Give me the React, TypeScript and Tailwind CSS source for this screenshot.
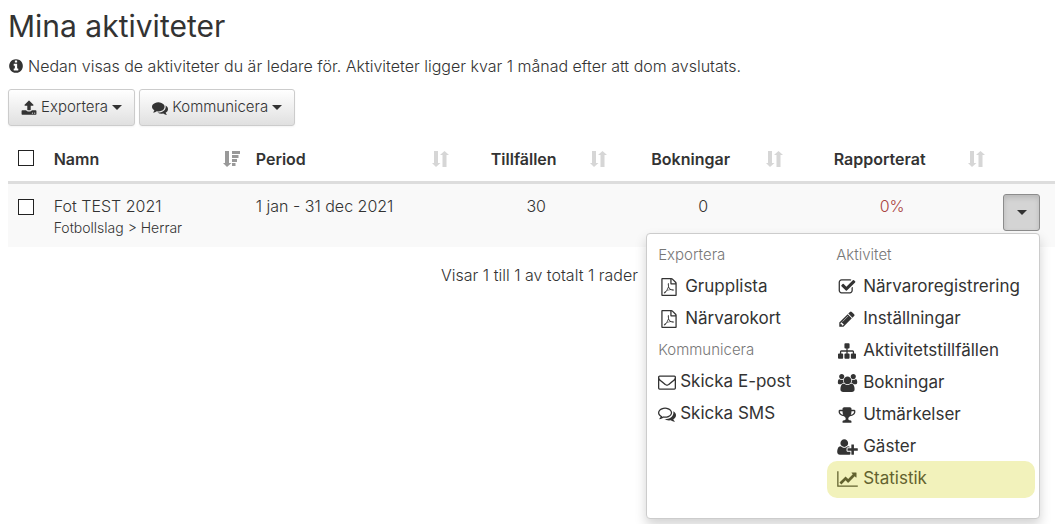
import type { ReactNode } from "react";

// Font glyphs are drawn on a 1792 unit grid; a few of them are 2048 wide.
const ICONS = {
  info: "M1152 1376v-160q0-14-9-23t-23-9h-96v-512q0-14-9-23t-23-9h-320q-14 0-23 9t-9 23v160q0 14 9 23t23 9h96v320h-96q-14 0-23 9t-9 23v160q0 14 9 23t23 9h448q14 0 23-9t9-23zm-128-896v-160q0-14-9-23t-23-9h-192q-14 0-23 9t-9 23v160q0 14 9 23t23 9h192q14 0 23-9t9-23zm640 416q0 209-103 385.5t-279.5 279.5-385.5 103-385.5-103-279.5-279.5-103-385.5 103-385.5 279.5-279.5 385.5-103 385.5 103 279.5 279.5 103 385.5z",
  upload:
    "M1344 1472q0-26-19-45t-45-19-45 19-19 45 19 45 45 19 45-19 19-45zm256 0q0-26-19-45t-45-19-45 19-19 45 19 45 45 19 45-19 19-45zm128-224v320q0 40-28 68t-68 28h-1472q-40 0-68-28t-28-68v-320q0-40 28-68t68-28h427q21 56 70.5 92t110.5 36h256q61 0 110.5-36t70.5-92h427q40 0 68 28t28 68zm-325-648q-17 40-59 40h-256v448q0 26-19 45t-45 19h-256q-26 0-45-19t-19-45v-448h-256q-42 0-59-40-17-39 14-69l448-448q18-19 45-19t45 19l448 448q31 30 14 69z",
  comments:
    "M1408 768q0 139-94 257t-256.5 186.5-353.5 68.5q-86 0-176-16-124 88-278 128-36 9-86 16h-3q-11 0-20.5-8t-11.5-21q-1-3-1-6.5t.5-6.5 2-6l2.5-5 3.5-5.5 4-5 4.5-5 4-4.5q5-6 23-25t26-29.5 22.5-29 25-38.5 20.5-44q-124-72-195-177t-71-224q0-139 94-257t256.5-186.5 353.5-68.5 353.5 68.5 256.5 186.5 94 257zm384 256q0 120-71 224.5t-195 176.5q10 24 20.5 44t25 38.5 22.5 29 26 29.5 23 25q1 1 4 4.5t4.5 5 4 5 3.5 5.5l2.5 5 2 6 .5 6.5-1 6.5q-3 14-13 22t-22 7q-50-7-86-16-154-40-278-128-90 16-176 16-271 0-472-132 58 4 88 4 161 0 309-45t264-129q125-92 192-212t67-254q0-77-23-152 129 71 204 178t75 230z",
  commentsOutline:
    "M704 384q-153 0-286 52t-211.5 141-78.5 191q0 82 53 158t149 132l97 56-35 84q34-20 62-39l44-31 53 10q78 14 153 14 153 0 286-52t211.5-141 78.5-191-78.5-191-211.5-141-286-52zm0-128q191 0 353.5 68.5t256.5 186.5 94 257-94 257-256.5 186.5-353.5 68.5q-86 0-176-16-124 88-278 128-36 9-86 16h-3q-11 0-20.5-8t-11.5-21q-1-3-1-6.5t.5-6.5 2-6l2.5-5 3.5-5.5 4-5 4.5-5 4-4.5q5-6 23-25t26-29.5 22.5-29 25-38.5 20.5-44q-124-72-195-177t-71-224q0-139 94-257t256.5-186.5 353.5-68.5zm822 1169q10 24 20.5 44t25 38.5 22.5 29 26 29.5 23 25q1 1 4 4.5t4.5 5 4 5 3.5 5.5l2.5 5 2 6 .5 6.5-1 6.5q-3 14-13 22t-22 7q-50-7-86-16-154-40-278-128-90 16-176 16-271 0-472-132 58 4 88 4 161 0 309-45t264-129q125-92 192-212t67-254q0-77-23-152 129 71 204 178t75 230q0 120-71 224.5t-195 176.5z",
  envelope:
    "M1664 1504v-768q-32 36-69 66-268 206-426 338-51 43-83 67t-86.5 48.5-102.5 24.5h-2q-48 0-102.5-24.5t-86.5-48.5-83-67q-158-132-426-338-37-30-69-66v768q0 13 9.5 22.5t22.5 9.5h1472q13 0 22.5-9.5t9.5-22.5zm0-1051v-24.5l-.5-13-3-12.5-5.5-9-9-7.5-14-2.5h-1472q-13 0-22.5 9.5t-9.5 22.5q0 168 147 284 193 152 401 317 6 5 35 29.5t46 37.5 44.5 31.5 50.5 27.5 43 9h2q20 0 43-9t50.5-27.5 44.5-31.5 46-37.5 35-29.5q208-165 401-317 54-43 100.5-115.5t46.5-131.5zm128-37v1088q0 66-47 113t-113 47h-1472q-66 0-113-47t-47-113v-1088q0-66 47-113t113-47h1472q66 0 113 47t47 113z",
  checkSquare:
    "M1472 930v318q0 119-84.5 203.5t-203.5 84.5h-832q-119 0-203.5-84.5t-84.5-203.5v-832q0-119 84.5-203.5t203.5-84.5h832q63 0 117 25 15 7 18 23 3 17-9 29l-49 49q-10 10-23 10-3 0-9-2-23-6-45-6h-832q-66 0-113 47t-47 113v832q0 66 47 113t113 47h832q66 0 113-47t47-113v-254q0-13 9-22l64-64q10-10 23-10 6 0 12 3 20 8 20 29zm231-489l-814 814q-24 24-57 24t-57-24l-430-430q-24-24-24-57t24-57l110-110q24-24 57-24t57 24l263 263 647-647q24-24 57-24t57 24l110 110q24 24 24 57t-24 57z",
  pencil:
    "M491 1536l91-91-235-235-91 91v107h128v128h107zm523-928q0-22-22-22-10 0-17 7l-542 542q-7 7-7 17 0 22 22 22 10 0 17-7l542-542q7-7 7-17zm-54-192l416 416-832 832h-416v-416zm683 96q0 53-37 90l-166 166-416-416 166-165q36-38 90-38 53 0 91 38l235 234q37 39 37 91z",
  sitemap:
    "M1792 1248v320q0 40-28 68t-68 28h-320q-40 0-68-28t-28-68v-320q0-40 28-68t68-28h96v-192h-512v192h96q40 0 68 28t28 68v320q0 40-28 68t-68 28h-320q-40 0-68-28t-28-68v-320q0-40 28-68t68-28h96v-192h-512v192h96q40 0 68 28t28 68v320q0 40-28 68t-68 28h-320q-40 0-68-28t-28-68v-320q0-40 28-68t68-28h96v-192q0-52 38-90t90-38h512v-192h-96q-40 0-68-28t-28-68v-320q0-40 28-68t68-28h320q40 0 68 28t28 68v320q0 40-28 68t-68 28h-96v192h512q52 0 90 38t38 90v192h96q40 0 68 28t28 68z",
  users:
    "M657 896q-162 5-265 128h-134q-82 0-138-40.5t-56-118.5q0-353 124-353 6 0 43.5 21t97.5 42.5 119 21.5q67 0 133-23-5 37-5 66 0 159 93 256zm1071 637q0 120-73 189.5t-194 69.5h-874q-121 0-194-69.5t-73-189.5q0-53 3.5-103.5t14-109 26.5-108.5 43-97.5 62-81 85.5-53.5 111.5-20q10 0 43 21.5t73 48 107 48 135 21.5 135-21.5 107-48 73-48 43-21.5q61 0 111.5 20t85.5 53.5 62 81 43 97.5 26.5 108.5 14 109 3.5 103.5zm-1024-1277q0 106-75 181t-181 75-181-75-75-181 75-181 181-75 181 75 75 181zm704 384q0 159-112.5 271.5t-271.5 112.5-271.5-112.5-112.5-271.5 112.5-271.5 271.5-112.5 271.5 112.5 112.5 271.5zm576 225q0 78-56 118.5t-138 40.5h-134q-103-123-265-128 93-97 93-256 0-29-5-66 66 23 133 23 59 0 119-21.5t97.5-42.5 43.5-21q124 0 124 353zm-128-609q0 106-75 181t-181 75-181-75-75-181 75-181 181-75 181 75 75 181z",
  trophy:
    "M522 883q-74-162-74-371h-256v96q0 78 94.5 162t235.5 113zm1078-275v-96h-256q0 209-74 371 141-29 235.5-113t94.5-162zm128-128v128q0 71-41.5 143t-112 130-173 97.5-215.5 44.5q-42 54-95 95-38 34-52.5 72.5t-14.5 89.5q0 54 30.5 91t97.5 37q75 0 133.5 45.5t58.5 114.5v64q0 14-9 23t-23 9h-832q-14 0-23-9t-9-23v-64q0-69 58.5-114.5t133.5-45.5q67 0 97.5-37t30.5-91q0-51-14.5-89.5t-52.5-72.5q-53-41-95-95-113-5-215.5-44.5t-173-97.5-112-130-41.5-143v-128q0-40 28-68t68-28h288v-96q0-66 47-113t113-47h576q66 0 113 47t47 113v96h288q40 0 68 28t28 68z",
  userPlus:
    "M704 896q-159 0-271.5-112.5t-112.5-271.5 112.5-271.5 271.5-112.5 271.5 112.5 112.5 271.5-112.5 271.5-271.5 112.5zm960 128h352q13 0 22.5 9.5t9.5 22.5v192q0 13-9.5 22.5t-22.5 9.5h-352v352q0 13-9.5 22.5t-22.5 9.5h-192q-13 0-22.5-9.5t-9.5-22.5v-352h-352q-13 0-22.5-9.5t-9.5-22.5v-192q0-13 9.5-22.5t22.5-9.5h352v-352q0-13 9.5-22.5t22.5-9.5h192q13 0 22.5 9.5t9.5 22.5v352zm-736 224q0 52 38 90t90 38h256v238q-68 50-171 50h-874q-121 0-194-69t-73-190q0-53 3.5-103.5t14-109 26.5-108.5 43-97.5 62-81 85.5-53.5 111.5-20q19 0 39 17 79 61 154.5 91.5t164.5 30.5 164.5-30.5 154.5-91.5q20-17 39-17 132 0 217 96h-223q-52 0-90 38t-38 90v192z",
  lineChart:
    "M2048 1536v128h-2048v-1536h128v1408h1920zm-128-1248v435q0 21-19.5 29.5t-35.5-7.5l-121-121-633 633q-10 10-23 10t-23-10l-233-233-416 416-192-192 585-585q10-10 23-10t23 10l233 233 464-464-121-121q-16-16-7.5-35.5t29.5-19.5h435q14 0 23 9t9 23z",
  filePdf:
    "M1596 380q28 28 48 76t20 88v1152q0 40-28 68t-68 28h-1344q-40 0-68-28t-28-68v-1600q0-40 28-68t68-28h896q40 0 88 20t76 48zm-444-244v376h376q-10-29-22-41l-313-313q-12-12-41-22zm384 1528v-1024h-416q-40 0-68-28t-28-68v-416h-768v1536h1280zm-514-593q33 26 84 56 59-7 117-7 147 0 177 49 16 22 2 52 0 1-1 2l-2 2v1q-6 38-71 38-48 0-115-20t-130-53q-221 24-392 83-153 262-242 262-15 0-28-7l-24-12q-1-1-6-5-10-10-6-36 9-40 56-91.5t132-96.5q14-9 23 6 2 2 2 4 52-85 107-197 68-136 104-262-24-82-30.5-159.5t6.5-127.5q11-40 42-40h22q23 0 35 15 18 21 9 68-2 6-4 8 1 3 1 8v30q-2 123-14 192 55 164 146 238zm-576 411q52-24 137-158-51 40-87.5 84t-49.5 74zm398-920q-15 42-2 132 1-7 7-44 0-3 7-43 1-4 4-8-1-1-1-2-1-2-1-3-1-22-13-36 0 1-1 2v2zm-124 661q135-54 284-81-2-1-13-9.5t-16-13.5q-76-67-127-176-27 86-83 197-30 56-45 83zm646-16q-24-24-140-24 76 28 124 28 14 0 18-1 0-1-2-3z",
};

type IconName = keyof typeof ICONS;

const WIDE: IconName[] = ["users", "userPlus", "lineChart"];

function Icon({ name, className }: { name: IconName; className: string }) {
  return (
    <svg
      viewBox={WIDE.includes(name) ? "0 0 2048 1792" : "0 0 1792 1792"}
      fill="currentColor"
      className={`shrink-0 ${className}`}
      aria-hidden="true"
    >
      <path d={ICONS[name]} />
    </svg>
  );
}

function Caret() {
  return (
    <svg viewBox="0 0 10 5" fill="currentColor" className="h-[5px] w-2.5 shrink-0" aria-hidden="true">
      <path d="M0 0h10L5 5z" />
    </svg>
  );
}

function SortIcon({ active }: { active?: boolean }) {
  return (
    <svg
      viewBox="0 0 17 16"
      fill="currentColor"
      className={`h-4 w-[17px] shrink-0 ${active ? "text-[#999]" : "text-[#d6d6d6]"}`}
      aria-hidden="true"
    >
      <path d="M2 0h4v12h2.500L4 16 0 12h2z" />
      {active ? (
        <path d="M9 0h8v3H9zM9 4h6.500v3H9zM9 8h5v3H9zM9 12h3.500v3H9z" />
      ) : (
        <path d="M12.500 0L17 4h-2.500v12h-4V4H8z" />
      )}
    </svg>
  );
}

function ToolbarButton({ icon, children }: { icon: IconName; children: ReactNode }) {
  return (
    <button
      type="button"
      className="flex h-[37px] items-center gap-1 rounded-[3px] border border-[#ccc] bg-linear-to-b from-white to-[#e0e0e0] px-3 text-[15px] font-light shadow-xs"
    >
      <Icon name={icon} className="size-4" />
      {children}
      <Caret />
    </button>
  );
}

interface Column {
  label: string;
  width: string;
  active?: boolean;
  centered?: boolean;
}

const COLUMNS: Column[] = [
  { label: "Namn", width: "w-[19.3%]", active: true },
  { label: "Period", width: "w-[20%]" },
  { label: "Tillfällen", width: "w-[15.1%]", centered: true },
  { label: "Bokningar", width: "w-[16.8%]", centered: true },
  { label: "Rapporterat", width: "w-[19.3%]", centered: true },
];

interface MenuEntry {
  label: string;
  icon: IconName;
}

const EXPORTS: MenuEntry[] = [
  { label: "Grupplista", icon: "filePdf" },
  { label: "Närvarokort", icon: "filePdf" },
];

const MESSAGES: MenuEntry[] = [
  { label: "Skicka E-post", icon: "envelope" },
  { label: "Skicka SMS", icon: "commentsOutline" },
];

const ACTIVITY: MenuEntry[] = [
  { label: "Närvaroregistrering", icon: "checkSquare" },
  { label: "Inställningar", icon: "pencil" },
  { label: "Aktivitetstillfällen", icon: "sitemap" },
  { label: "Bokningar", icon: "users" },
  { label: "Utmärkelser", icon: "trophy" },
  { label: "Gäster", icon: "userPlus" },
];

function MenuHeader({ children }: { children: ReactNode }) {
  return <div className="flex h-[31px] items-center text-[15px] font-light text-[#777]">{children}</div>;
}

function MenuLink({ icon, label, className }: MenuEntry & { className: string }) {
  return (
    <a href="#" className={`flex items-center whitespace-nowrap ${className}`}>
      <span className="flex w-[22px] shrink-0 justify-center">
        <Icon name={icon} className={WIDE.includes(icon) ? "h-[18px] w-[21px]" : "size-[18px]"} />
      </span>
      {label}
    </a>
  );
}

function ActionMenu() {
  return (
    <div className="absolute top-full right-0 z-10 mt-0.5 flex w-[394px] rounded-[4px] border border-[#ccc] bg-white px-[11px] pt-1.5 pb-5 text-left text-[17px] shadow-[0_6px_12px_rgba(0,0,0,0.175)]">
      <div className="w-[178px]">
        <MenuHeader>Exportera</MenuHeader>
        {EXPORTS.map((entry) => (
          <MenuLink key={entry.label} {...entry} className="h-8 gap-[5px]" />
        ))}
        <MenuHeader>Kommunicera</MenuHeader>
        {MESSAGES.map((entry) => (
          <MenuLink key={entry.label} {...entry} className="-ml-0.5 h-8 gap-0.5" />
        ))}
      </div>
      <div className="flex-1">
        <MenuHeader>Aktivitet</MenuHeader>
        {ACTIVITY.map((entry) => (
          <MenuLink key={entry.label} {...entry} className="h-8 gap-[5px]" />
        ))}
        <MenuLink
          icon="lineChart"
          label="Statistik"
          className="-mt-0.5 -mr-[7px] -ml-[9px] h-[37px] gap-[5px] rounded-[10px] bg-[#f2f2bb] pl-[9px] text-[#62622f]"
        />
      </div>
    </div>
  );
}

function Checkbox({ label }: { label: string }) {
  return (
    <input
      type="checkbox"
      aria-label={label}
      className="block size-4 appearance-none border border-[#222] bg-white checked:bg-[#333]"
    />
  );
}

export default function App() {
  return (
    <main className="min-h-screen pt-2 pl-2 font-['Inter',sans-serif] text-base text-[#333]">
      <h1 className="text-3xl leading-9">Mina aktiviteter</h1>
      <p className="mt-2.5 flex items-center gap-1 leading-6 font-light">
        <Icon name="info" className="size-4" />
        Nedan visas de aktiviteter du är ledare för. Aktiviteter ligger kvar 1 månad efter att dom avslutats.
      </p>
      <div className="mt-[11px] flex gap-1">
        <ToolbarButton icon="upload">Exportera</ToolbarButton>
        <ToolbarButton icon="comments">Kommunicera</ToolbarButton>
      </div>

      <table className="mt-2.5 w-full table-fixed border-collapse">
        <thead>
          <tr className="h-[46px] border-b-[3px] border-[#ddd]">
            <th className="w-[3.6%] pr-2 pl-2.5">
              <Checkbox label="Markera alla" />
            </th>
            {COLUMNS.map((col) => (
              <th key={col.label} className={`px-2 pt-0.5 font-semibold ${col.width}`}>
                <div className="flex items-center gap-2">
                  <span className={`flex-1 ${col.centered ? "text-center" : "text-left"}`}>
                    {col.label}
                  </span>
                  <SortIcon active={col.active} />
                </div>
              </th>
            ))}
            <th />
          </tr>
        </thead>
        <tbody>
          <tr className="h-[65px] bg-[#f9f9f9] align-top font-light">
            <td className="pt-[15px] pr-2 pl-2.5">
              <Checkbox label="Markera Fot TEST 2021" />
            </td>
            <td className="px-2 pt-2.5">
              <div className="leading-6">Fot TEST 2021</div>
              <div className="text-sm">Fotbollslag &gt; Herrar</div>
            </td>
            <td className="px-2 pt-2.5">1 jan - 31 dec 2021</td>
            <td className="px-2 pt-2.5 text-center">30</td>
            <td className="px-2 pt-2.5 text-center">0</td>
            <td className="px-2 pt-2.5 text-center text-[#a94442]">0%</td>
            <td className="pt-2.5 pl-2.5">
              <div className="relative w-[37px] font-normal">
                <button
                  type="button"
                  aria-label="Visa alternativ"
                  aria-expanded="true"
                  className="flex h-[37px] w-full items-center justify-center rounded-[3px] border border-[#8c8c8c] bg-[#d4d4d4] shadow-[inset_0_3px_5px_rgba(0,0,0,0.125)]"
                >
                  <Caret />
                </button>
                <ActionMenu />
              </div>
            </td>
          </tr>
        </tbody>
      </table>
      <p className="mt-4 pl-4 text-center leading-6 font-light">Visar 1 till 1 av totalt 1 rader</p>
    </main>
  );
}
